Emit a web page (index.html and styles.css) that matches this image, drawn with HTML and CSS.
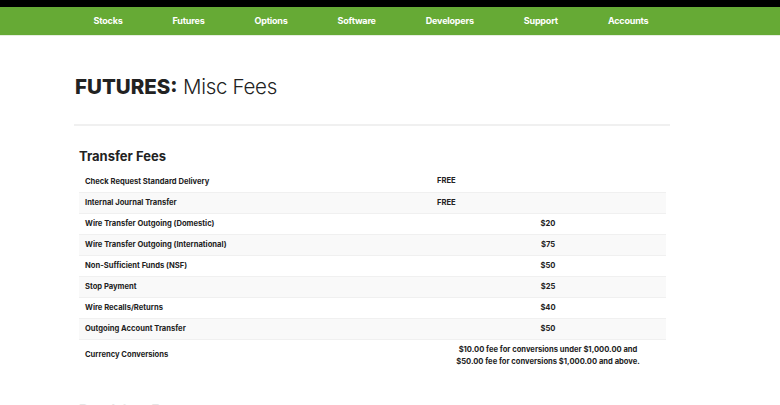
FILE: index.html
```html
<!DOCTYPE html>
<html>
<head>
<meta charset="utf-8">
<link rel="stylesheet" href="styles.css">
</head>
<body>
<div class="topstrip"></div>
<nav class="nav">
  <a>Stocks</a>
  <a>Futures</a>
  <a>Options</a>
  <a>Software</a>
  <a>Developers</a>
  <a>Support</a>
  <a>Accounts</a>
</nav>
<main class="page">
  <h1 class="title"><b>FUTURES:</b> Misc Fees</h1>
  <hr class="rule">
  <h2 class="section">Transfer Fees</h2>
  <table class="fees">
    <tr><td class="label">Check Request Standard Delivery</td><td class="val left">FREE</td></tr>
    <tr><td class="label">Internal Journal Transfer</td><td class="val left">FREE</td></tr>
    <tr><td class="label">Wire Transfer Outgoing (Domestic)</td><td class="val">$20</td></tr>
    <tr><td class="label">Wire Transfer Outgoing (International)</td><td class="val">$75</td></tr>
    <tr><td class="label">Non-Sufficient Funds (NSF)</td><td class="val">$50</td></tr>
    <tr><td class="label">Stop Payment</td><td class="val">$25</td></tr>
    <tr><td class="label">Wire Recalls/Returns</td><td class="val">$40</td></tr>
    <tr><td class="label">Outgoing Account Transfer</td><td class="val">$50</td></tr>
    <tr class="tall"><td class="label">Currency Conversions</td><td class="val">$10.00 fee for conversions under $1,000.00 and<br>$50.00 fee for conversions $1,000.00 and above.</td></tr>
  </table>
  <h2 class="section next">Regulatory Fees</h2>
</main>
</body>
</html>
```
FILE: styles.css
```css
html, body { margin: 0; padding: 0; background: #fff; }
body { font-family: Inter, "Liberation Sans", sans-serif; color: #222; overflow: hidden; height: 405px; }
.topstrip { height: 7px; background: #000; }
.nav {
  height: 29px;
  background: #66aa35;
  border-bottom: 1px solid #e6eee0;
  display: flex;
  align-items: center;
  justify-content: center;
  gap: 50px;
  padding-right: 38px;
  padding-bottom: 1px;
  box-sizing: border-box;
}
.nav a { color: #fff; font-size: 9px; font-weight: 700; letter-spacing: -0.2px; }
.page { margin-left: 74px; width: 596px; }
.title { margin: 39px 0 0 1px; font-size: 20.5px; font-weight: 300; line-height: 24px; letter-spacing: -0.3px; color: #222; }
.title b { font-weight: 800; letter-spacing: 0; }
.rule { margin: 25px 0 0; border: 0; height: 2px; background: #f0f0f0; }
.section { margin: 22px 0 0 5px; font-size: 13px; font-weight: 700; line-height: 16px; color: #222; }
.fees { margin: 7px 0 0 5px; width: 587px; border-collapse: collapse; font-size: 7.6px; font-weight: 700; }
.fees tr { height: 21px; border-bottom: 1px solid #f0f0f0; }
.fees tr:nth-child(even) { background: #f9f9f9; }
.fees tr.tall { height: 34px; border-bottom: 0; }
.fees td { padding: 0; vertical-align: middle; }
.fees tr.tall td { vertical-align: top; padding-top: 4px; }
.label { width: 345px; padding-left: 6px !important; }
.fees tr.tall td.label { padding-top: 10px; }
.val { text-align: center; line-height: 12px; }
.val.left { text-align: left; padding-left: 7px !important; }
.next { margin-top: 28px; color: #e6e6e6; }
```
